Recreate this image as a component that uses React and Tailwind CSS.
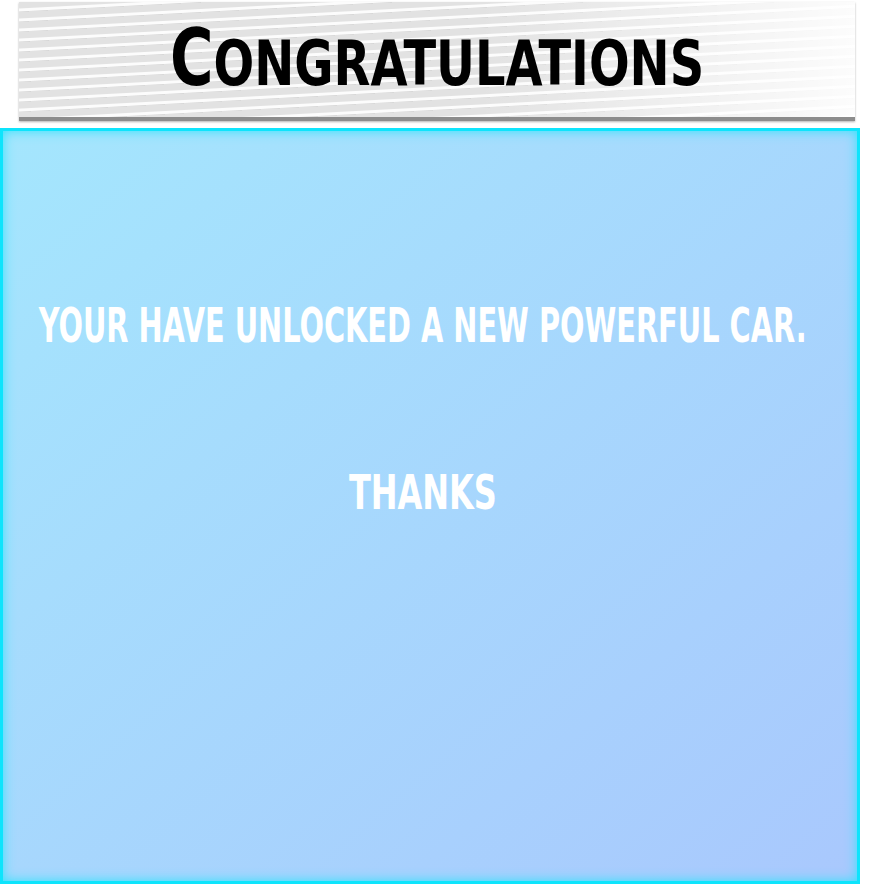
export default function App() {
  return (
    <div className="w-[888px] h-[884px] bg-white overflow-hidden relative">
      {/* header banner */}
      <div className="ml-[19px] mt-[2px] w-[836px] h-[119px] flex items-center justify-center border-b-[4px] border-[#8c8c8c] bg-[image:repeating-linear-gradient(177deg,transparent_0px,transparent_6px,rgba(255,255,255,0.9)_7px,rgba(255,255,255,0.9)_9px,rgba(0,0,0,0.05)_10px)] bg-[#e2e2e2] shadow-[0_1px_2px_rgba(0,0,0,0.3)]">
        <div className="w-full h-full flex items-center justify-center bg-gradient-to-r from-transparent via-transparent via-55% to-white/90">
          <h1 className="font-['DejaVu_Sans_Condensed','DejaVu_Sans',sans-serif] font-bold text-black leading-none whitespace-nowrap scale-x-[0.845] mt-[-4px]">
            <span className="text-[78px]">C</span>
            <span className="text-[63px]">ONGRATULATIONS</span>
          </h1>
        </div>
      </div>

      {/* panel */}
      <div className="mt-[7px] w-[860px] h-[756px] border-[3px] border-[#0de4fc] shadow-[inset_0_0_12px_#2fe3fd] bg-gradient-to-br from-[#a4e6fd] to-[#a9c8fd] flex flex-col items-center">
        <p className="mt-[170px] mr-[14px] font-['DejaVu_Sans_Condensed','DejaVu_Sans',sans-serif] font-bold text-white text-[48px] leading-none uppercase whitespace-nowrap scale-x-[0.667]">
          Your have unlocked a new powerful car.
        </p>
        <p className="mt-[119px] mr-[15px] font-['DejaVu_Sans_Condensed','DejaVu_Sans',sans-serif] font-bold text-white text-[48px] leading-none uppercase whitespace-nowrap scale-x-[0.74]">
          Thanks
        </p>
      </div>
    </div>
  );
}
